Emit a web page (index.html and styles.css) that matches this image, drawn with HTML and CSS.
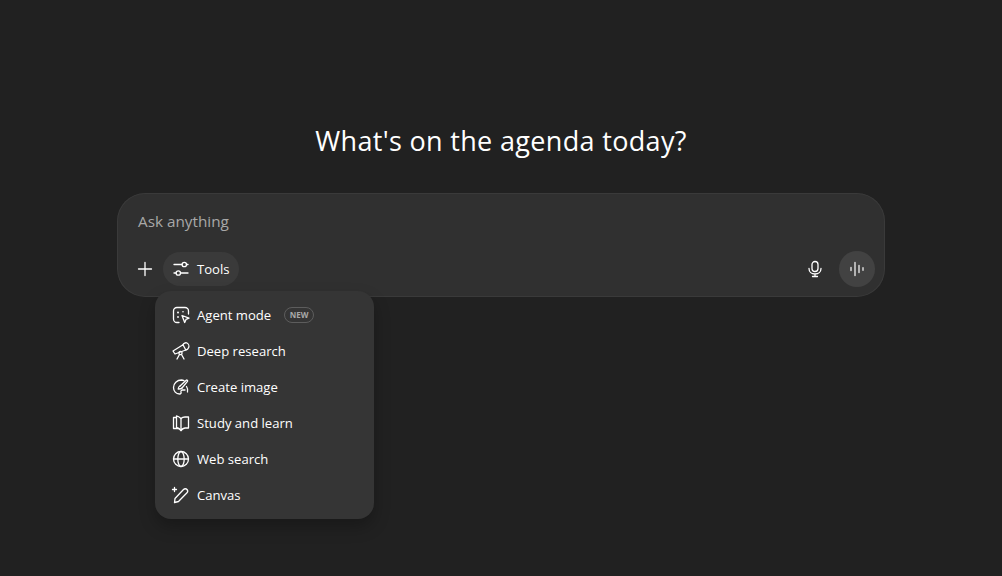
FILE: index.html
```html
<!DOCTYPE html>
<html lang="en">
<head>
    <meta charset="UTF-8">
    <meta name="viewport" content="width=device-width, initial-scale=1.0">
    <title>ChatGPT</title>
    <link rel="stylesheet" href="styles.css">
</head>
<body>
    <main class="page">
        <h1 class="title">What's on the agenda today?</h1>
        <div class="composer">
            <div class="prompt">Ask anything</div>
            <div class="actions">
                <button class="icon-btn plus" aria-label="Add">
                    <svg width="20" height="20" viewBox="0 0 20 20"><path d="M10 3.500v13M3.500 10h13"/></svg>
                </button>
                <button class="tools-btn">
                    <svg width="20" height="20" viewBox="0 0 20 20"><path d="M3 5.500h8M15.500 5.500H17M3 14h2M9.500 14H17"/><circle cx="13.300" cy="5.500" r="2.200"/><circle cx="7.300" cy="14" r="2.200"/></svg>
                    <span>Tools</span>
                </button>
                <div class="spacer"></div>
                <button class="icon-btn mic" aria-label="Dictate">
                    <svg width="20" height="20" viewBox="0 0 20 20"><rect x="7" y="2.500" width="6" height="10" rx="3"/><path d="M4 9.500c0 3.400 2.600 5.500 6 5.500s6-2.100 6-5.500M10 15v2.500M7.500 17.500h5"/></svg>
                </button>
                <button class="voice-btn" aria-label="Voice mode">
                    <svg width="20" height="20" viewBox="0 0 20 20"><path d="M4 8.500v3M8 3.500v13M12 6.500v7M16 8.800v2.400"/></svg>
                </button>
            </div>
            <ul class="menu">
                <li class="menu-item">
                    <svg width="20" height="20" viewBox="0 0 20 20"><path d="M8 17.500H6A3.500 3.500 0 0 1 2.500 14V6A3.500 3.500 0 0 1 6 2.500h8A3.500 3.500 0 0 1 17.500 6v3"/><circle class="dot" cx="7" cy="7.500" r="1"/><circle class="dot" cx="12" cy="6.800" r=".8"/><circle class="dot" cx="7" cy="12" r=".9"/><path d="M11 10.500l7 2.700-3 1.200-1.300 3.100z"/></svg>
                    <span>Agent mode</span>
                    <span class="badge">NEW</span>
                </li>
                <li class="menu-item">
                    <svg width="20" height="20" viewBox="0 0 20 20"><path d="M2 10l10-6.200 2.800 5.200L4 13z"/><path d="M12 3.800c.6-1.500 2.500-2.500 4-1.800 1.500.8 2.300 3 1.700 4.500-.5 1.300-1.800 2.300-2.900 2.500"/><circle cx="9.500" cy="12" r="1.600"/><path d="M8.500 13.500l-2.500 4.500M10.500 13.500l2.500 4.500"/></svg>
                    <span>Deep research</span>
                </li>
                <li class="menu-item">
                    <svg width="20" height="20" viewBox="0 0 20 20"><path d="M13 3.600A7.800 7.800 0 0 0 10.500 3C6 3 2.500 6.300 2.500 10.500c0 3.500 2.500 6.500 6 6.500 1.500 0 1.800-1 1.500-2-.3-1.100.4-2 1.500-2h2.500"/><path d="M9 9l6.200-5.800c.8-.6 1.800.4 1.300 1.200L11 11"/><path d="M9 9c-1.200.4-1.700 1.700-1.800 3 1.700.1 3.100-.3 3.800-1"/><path d="M15.500 9.500c1.200 1.800 1.500 3.800 1 5.500"/></svg>
                    <span>Create image</span>
                </li>
                <li class="menu-item">
                    <svg width="20" height="20" viewBox="0 0 20 20"><path d="M10 5.500C8.500 4 7 3 5.500 2.800v11.700c1.500.4 3.300 1.500 4.500 3"/><path d="M10 5.500c1-1 2.500-1.500 4-1.500h3.500v11H14c-1.500.2-3 1.200-4 2.500z"/><path d="M5.500 4.500h-3v11H8"/></svg>
                    <span>Study and learn</span>
                </li>
                <li class="menu-item">
                    <svg width="20" height="20" viewBox="0 0 20 20"><circle cx="10" cy="10" r="7.500"/><ellipse cx="10" cy="10" rx="3.200" ry="7.500"/><path d="M2.500 10h15"/></svg>
                    <span>Web search</span>
                </li>
                <li class="menu-item">
                    <svg width="20" height="20" viewBox="0 0 20 20"><path d="M3.500 17.500l.5-4 8.500-9c1-1 2.700-1 3.500 0s.9 2.400 0 3.300l-8.500 8.700z"/><path d="M3.500 2.500v4M1.500 4.500h4"/></svg>
                    <span>Canvas</span>
                </li>
            </ul>
        </div>
    </main>
</body>
</html>
```

FILE: styles.css
```css
html, body {
    margin: 0;
    padding: 0;
    height: 100%;
}
body {
    background-color: #212121;
    color: #fff;
    font-family: "Open Sans", Arial, sans-serif;
    overflow: hidden;
}
.page {
    display: flex;
    flex-direction: column;
    align-items: center;
    padding-top: 122px;
}
.title {
    margin: 0 0 33px;
    height: 38px;
    line-height: 38px;
    font-size: 27px;
    font-weight: 400;
    letter-spacing: 0.33px;
}
svg {
    fill: none;
    stroke: currentColor;
    stroke-width: 1.3;
    stroke-linecap: round;
    stroke-linejoin: round;
    flex-shrink: 0;
}
.composer {
    position: relative;
    box-sizing: border-box;
    width: 768px;
    height: 104px;
    padding: 0 10px 10px;
    background: #303030;
    border-radius: 28px;
    box-shadow: inset 0 0 0 1px rgba(255, 255, 255, 0.05);
    display: flex;
    flex-direction: column;
    justify-content: space-between;
}
.prompt {
    padding: 17px 11px 0;
    font-size: 15.300px;
    line-height: 22px;
    color: #a8a8a8;
}
.actions {
    display: flex;
    align-items: center;
    height: 36px;
}
button {
    border: none;
    background: none;
    color: #fff;
    font-family: inherit;
    padding: 0;
    display: flex;
    align-items: center;
    justify-content: center;
}
.icon-btn {
    width: 36px;
    height: 36px;
}
.tools-btn {
    height: 34px;
    gap: 6px;
    padding: 0 9px 0 8px;
    background: #3a3a3a;
    border-radius: 17px;
    font-size: 13.100px;
}
.spacer {
    flex: 1;
}
.mic {
    margin-right: 6px;
}
.voice-btn {
    width: 36px;
    height: 36px;
    border-radius: 50%;
    background: #424242;
    color: #d8d8d8;
}
.voice-btn svg {
    stroke-width: 1.500;
}
.menu {
    position: absolute;
    left: 38px;
    top: 98px;
    width: 219px;
    box-sizing: border-box;
    margin: 0;
    padding: 6px;
    list-style: none;
    background: #353535;
    border-radius: 16px;
    box-shadow: 0 8px 16px rgba(0, 0, 0, 0.25);
}
.menu-item {
    height: 36px;
    padding: 0 10px;
    display: flex;
    align-items: center;
    gap: 6px;
    font-size: 13.100px;
}
.badge {
    margin-left: 7px;
    box-sizing: border-box;
    height: 16px;
    padding: 0 4.500px;
    line-height: 14px;
    border: 1px solid #5d5d5d;
    border-radius: 8px;
    font-size: 8px;
    font-weight: 700;
    color: #a8a8a8;
}
.dot {
    fill: currentColor;
    stroke: none;
}
```
